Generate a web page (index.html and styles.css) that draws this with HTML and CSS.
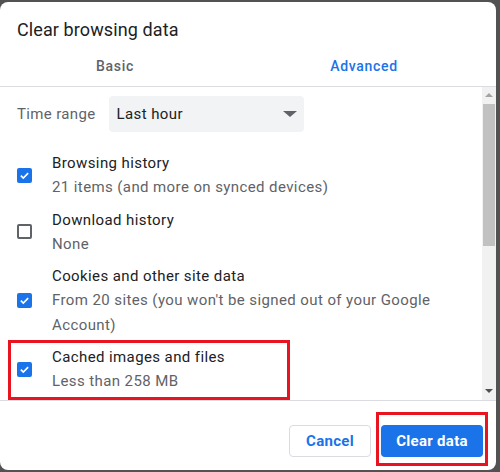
FILE: index.html
```html
<!DOCTYPE html>
<html>
<head>
<meta charset="utf-8">
<link rel="stylesheet" href="styles.css">
</head>
<body>
<div class="dialog">
  <h1 class="title">Clear browsing data</h1>
  <div class="tabs">
    <div class="tab">Basic</div>
    <div class="tab active">Advanced</div>
  </div>
  <div class="body">
    <div class="list">
      <div class="range">
        <span class="range-label">Time range</span>
        <div class="select"><span>Last hour</span><span class="caret"></span></div>
      </div>
      <div class="item">
        <span class="cb checked"><svg viewBox="0 0 16 16" width="16" height="16"><path d="M3.5 8.2 6.5 11.2 12.5 5" fill="none" stroke="#fff" stroke-width="2"/></svg></span>
        <div class="text"><div class="name">Browsing history</div><div class="desc">21 items (and more on synced devices)</div></div>
      </div>
      <div class="item">
        <span class="cb"></span>
        <div class="text"><div class="name">Download history</div><div class="desc">None</div></div>
      </div>
      <div class="item">
        <span class="cb checked"><svg viewBox="0 0 16 16" width="16" height="16"><path d="M3.5 8.2 6.5 11.2 12.5 5" fill="none" stroke="#fff" stroke-width="2"/></svg></span>
        <div class="text"><div class="name">Cookies and other site data</div><div class="desc">From 20 sites (you won't be signed out of your Google Account)</div></div>
      </div>
      <div class="item highlight">
        <span class="cb checked"><svg viewBox="0 0 16 16" width="16" height="16"><path d="M3.5 8.2 6.5 11.2 12.5 5" fill="none" stroke="#fff" stroke-width="2"/></svg></span>
        <div class="text"><div class="name">Cached images and files</div><div class="desc">Less than 258 MB</div></div>
      </div>
    </div>
    <div class="scrollbar">
      <span class="arrow up"></span>
      <div class="track"><div class="thumb"></div></div>
      <span class="arrow down"></span>
    </div>
  </div>
  <div class="footer">
    <button class="btn cancel">Cancel</button>
    <span class="mark"><button class="btn primary">Clear data</button></span>
  </div>
</div>
</body>
</html>
```
FILE: styles.css
```css
html, body { margin: 0; padding: 0; }
body {
  background: #525252;
  width: 500px;
  height: 472px;
  overflow: hidden;
  font-family: Roboto, "Liberation Sans", sans-serif;
}
.dialog {
  margin-top: 2px;
  width: 496px;
  height: 468px;
  background: #fff;
  border-radius: 8px;
  display: flex;
  flex-direction: column;
  overflow: hidden;
}
.title {
  margin: 0;
  padding: 15px 0 0 17px;
  height: 36px;
  font-size: 18px;
  font-weight: 400;
  letter-spacing: 0.1px;
  line-height: 26px;
  color: #202124;
}
.tabs {
  display: grid;
  grid-template-columns: 230px 268px;
  height: 33px;
  border-bottom: 1px solid #dadce0;
}
.tab {
  text-align: center;
  font-size: 14px;
  font-weight: 500;
  letter-spacing: 0.7px;
  line-height: 26px;
  color: #5f6368;
}
.tab.active { color: #1a73e8; }
.body {
  display: flex;
  height: 313px;
  border-bottom: 1px solid #dadce0;
}
.list {
  flex: 1;
  padding: 9px 20px 0 17px;
  overflow: hidden;
}
.range {
  display: flex;
  align-items: center;
  gap: 13px;
  height: 36px;
  margin-bottom: 19px;
}
.range-label {
  font-size: 15px;
  letter-spacing: 0.35px;
  color: #5f6368;
}
.select {
  width: 195px;
  height: 36px;
  box-sizing: border-box;
  background: #f1f3f4;
  border-radius: 4px;
  display: flex;
  align-items: center;
  justify-content: space-between;
  padding: 0 6px 0 8px;
  font-size: 15px;
  letter-spacing: 0.4px;
  color: #202124;
}
.caret {
  width: 0;
  height: 0;
  border-left: 7px solid transparent;
  border-right: 7px solid transparent;
  border-top: 6px solid #5f6368;
  margin-right: 1px;
}
.item {
  display: flex;
  align-items: center;
  gap: 20px;
  margin-bottom: 8px;
  position: relative;
}
.cb {
  width: 15px;
  height: 15px;
  box-sizing: border-box;
  border: 2px solid #5f6368;
  border-radius: 2px;
  flex: none;
  display: flex;
  align-items: center;
  justify-content: center;
}
.cb.checked {
  background: #1a73e8;
  border-color: #1a73e8;
}
.cb svg { width: 13px; height: 13px; flex: none; }
.text { font-size: 15px; letter-spacing: 0.4px; line-height: 24.25px; }
.name { color: #202124; }
.desc { color: #5f6368; }
.highlight::after {
  content: "";
  position: absolute;
  left: -9px;
  top: -5px;
  width: 282px;
  height: 60px;
  box-sizing: border-box;
  border: 3px solid #e8141f;
}
.scrollbar {
  width: 14px;
  background: #f1f1f1;
  display: flex;
  flex-direction: column;
  align-items: center;
}
.arrow {
  width: 0;
  height: 0;
  border-left: 4px solid transparent;
  border-right: 4px solid transparent;
  margin: 5px 0;
}
.arrow.up { border-bottom: 4px solid #a3a3a3; margin-top: 6px; }
.arrow.down { border-top: 4px solid #505050; margin-bottom: 7px; }
.track { flex: 1; width: 100%; }
.thumb {
  margin: 2px 1px 0;
  height: 142px;
  background: #c1c1c1;
}
.footer {
  flex: 1;
  display: flex;
  justify-content: flex-end;
  align-items: flex-start;
  gap: 10px;
  padding: 24px 13px 0 0;
}
.btn {
  height: 32px;
  border-radius: 4px;
  font-family: Roboto, "Liberation Sans", sans-serif;
  font-size: 15px;
  font-weight: 700;
  letter-spacing: 0.3px;
  padding: 0;
  cursor: pointer;
}
.cancel {
  width: 82px;
  background: #fff;
  border: 1px solid #dadce0;
  color: #1a73e8;
}
.primary {
  width: 102px;
  background: #1a73e8;
  border: none;
  color: #fff;
  display: block;
}
.mark { position: relative; display: block; }
.mark::after {
  content: "";
  position: absolute;
  left: -5px;
  right: -5px;
  top: -13px;
  bottom: -9px;
  border: 3px solid #e8141f;
}
```
